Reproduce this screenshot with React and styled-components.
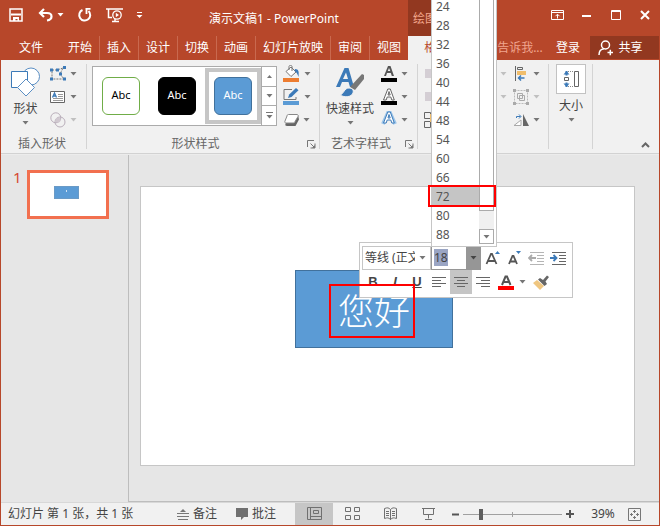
import React, { useEffect, useRef, useState } from "react";
import styled, { createGlobalStyle, css } from "styled-components";

const c = {
  red: "#b7472a",
  darkRed: "#923820",
  ribbon: "#f1f1f1",
  canvas: "#e6e6e6",
  line: "#c6c6c6",
  text: "#444444",
  muted: "#666666",
  grey: "#767676",
  blue: "#3c7ab8",
  fill: "#5b9bd5",
};

const GlobalStyle = createGlobalStyle`
  * { box-sizing: border-box; }
  body {
    margin: 0;
    overflow: hidden;
    font: 12px/18px "Noto Sans", "Noto Sans CJK SC", sans-serif;
    color: ${c.text};
  }
  button, input, select { font: inherit; color: inherit; }
  svg { display: block; flex: none; }
`;

const Window = styled.div`
  display: flex;
  flex-direction: column;
  min-height: 100vh;
  border: 1px solid ${c.red};
  border-top: 0;
  background: ${c.canvas};
`;

const PlainButton = styled.button`
  display: flex;
  align-items: center;
  justify-content: center;
  padding: 0;
  border: 0;
  background: transparent;
  white-space: nowrap;
`;

/* Title bar */
const TitleBar = styled.header`
  display: grid;
  grid-template-columns: 139px 1fr 89px 162px;
  height: 36px;
  background: ${c.red};
  color: #fff;
`;
const QuickAccess = styled.div`
  display: flex;
  align-items: flex-start;
  gap: 13px;
  padding: 7px 0 0 7px;
`;
const QuickButton = styled(PlainButton)`
  gap: 4px;
  height: 16px;
`;
const Title = styled.h1`
  margin: 0;
  padding-top: 2px;
  font-size: 12px;
  font-weight: 400;
  line-height: 34px;
  text-align: center;
  white-space: nowrap;
`;
const ContextLabel = styled.div`
  padding-left: 5px;
  background: ${c.darkRed};
  color: #f3a78d;
  line-height: 38px;
  white-space: nowrap;
  overflow: hidden;
`;
const Clipped = styled.span`
  display: block;
  width: ${(p) => p.$width}px;
  overflow: hidden;
`;
const WindowControls = styled.div`
  display: flex;
  justify-content: flex-end;
`;
const WindowButton = styled(PlainButton)`
  width: 29px;
  height: 30px;
`;

/* Tabs */
const TabBar = styled.nav`
  display: flex;
  height: 24px;
  background: ${c.red};
  color: #fff;
`;
const Tab = styled(PlainButton)`
  padding: 0 7px;
  border-right: ${(p) => (p.$last ? "0" : "1px solid #c9694f")};
`;
const FileTab = styled(PlainButton)`
  width: 60px;
`;
const ActiveTab = styled(PlainButton)`
  width: 89px;
  justify-content: flex-start;
  padding-left: 16px;
  background: ${c.ribbon};
  color: ${c.red};
`;
const TellMe = styled(PlainButton)`
  flex: 1;
  justify-content: flex-start;
  color: #f0a58e;
`;
const SignIn = styled(PlainButton)`
  width: 44px;
`;
const Share = styled(PlainButton)`
  width: 69px;
  gap: 4px;
  margin-bottom: 1px;
  padding-right: 8px;
  background: ${c.darkRed};
`;

/* Ribbon */
const Ribbon = styled.section`
  display: flex;
  height: 94px;
  background: ${c.ribbon};
  border-bottom: 1px solid #d2d2d2;
`;
const Group = styled.div`
  display: flex;
  flex-direction: column;
  width: ${(p) => p.$width}px;
`;
const GroupBody = styled.div`
  display: flex;
  height: 72px;
  padding-left: ${(p) => p.$pad}px;
`;
const GroupLabel = styled.div`
  display: flex;
  align-items: center;
  height: 21px;
  padding: 3px 3px 0 0;
  color: ${c.muted};
  span { flex: 1; text-align: center; white-space: nowrap; }
`;
const Launcher = styled(PlainButton)`
  margin-left: 3px;
`;
const Separator = styled.div`
  width: 1px;
  margin: 4px 0;
  background: #d4d4d4;
`;
const BigButton = styled(PlainButton)`
  flex-direction: column;
  justify-content: flex-start;
  width: ${(p) => p.$width}px;
  padding-top: ${(p) => p.$top}px;
  gap: 3px;
`;
const Column = styled.div`
  display: flex;
  flex-direction: column;
  padding-top: 2px;
  margin-left: ${(p) => p.$gap || 0}px;
`;
const SmallButton = styled(PlainButton)`
  gap: 4px;
  height: 23px;
`;
const SizeBox = styled.span`
  display: grid;
  place-items: center;
  width: 30px;
  height: 30px;
  border: 1px solid #c2c2c2;
  background: #fff;
`;
const Gallery = styled.div`
  display: flex;
  width: 185px;
  height: 60px;
  margin-top: 6px;
  border: 1px solid #ababab;
  background: #fff;
`;
const GalleryItem = styled.button`
  display: grid;
  place-items: center;
  width: 56px;
  height: 56px;
  margin: 1px 0 0;
  padding: 0;
  border: ${(p) => (p.$selected ? `4px solid ${c.line}` : "4px solid transparent")};
  background: #fff;
`;
const Swatch = styled.span`
  width: 38px;
  height: 38px;
  border: 1px solid ${(p) => p.$edge};
  border-radius: 6px;
  background: ${(p) => p.$fill};
  color: ${(p) => p.$ink};
  font-size: 11px;
  line-height: 34px;
`;
const GalleryScroll = styled.div`
  display: flex;
  flex-direction: column;
  width: 15px;
  margin-left: auto;
  border-left: 1px solid #ababab;
`;
const GalleryStep = styled(PlainButton)`
  flex: 1;
  & + & { border-top: 1px solid #ababab; }
`;
const ArrangeColumn = styled(Column)`
  width: 83px;
`;
const WideSplit = styled(SmallButton)`
  justify-content: space-between;
`;
const Collapse = styled(PlainButton)`
  align-self: flex-end;
  width: 28px;
  height: 16px;
  margin-left: auto;
`;

/* Work area */
const Work = styled.main`
  display: flex;
  flex: 1;
  border-top: 1px solid #ececec;
`;
const Slides = styled.aside`
  display: flex;
  align-items: flex-start;
  gap: 6px;
  width: 128px;
  padding: 15px 0 0 12px;
  border-right: 1px solid #bdbdbd;
`;
const SlideNumber = styled.span`
  width: 8px;
  color: #d64a32;
  font-size: 15px;
  line-height: 14px;
`;
const Thumb = styled.button`
  display: flex;
  align-items: flex-start;
  width: 82px;
  height: 49px;
  padding: 13px 0 0 24px;
  border: 3px solid #f2704f;
  background: #fff;
`;
const ThumbShape = styled.span`
  display: block;
  width: 25px;
  height: 13px;
  border: 1px solid #6a9ac6;
  background: radial-gradient(circle at 50% 40%, #cfe2f3 0 1px, transparent 1px) ${c.fill};
`;
const Stage = styled.section`
  display: flex;
  flex: 1;
  padding: 31px 24px 35px 11px;
  border-bottom: 1px solid #bdbdbd;
`;
const Slide = styled.div`
  position: relative;
  flex: 1;
  border: 1px solid ${c.line};
  background: #fff;
`;
const Shape = styled.div`
  position: absolute;
  left: 154px;
  top: 83px;
  display: grid;
  place-items: center;
  width: 158px;
  height: 78px;
  border: 1px solid #41719c;
  background: ${c.fill};
  color: #fff;
  font: 300 36px/74px "Noto Sans CJK SC", sans-serif;
`;
const Callout = styled.div`
  position: absolute;
  z-index: 5;
  border: 2px solid #f00;
  pointer-events: none;
  ${(p) =>
    p.$kind === "size"
      ? css`left: 287px; top: -2px; width: 68px; height: 22px;`
      : css`left: 188px; top: 97px; width: 86px; height: 54px;`}
`;

/* Mini toolbar */
const MiniToolbar = styled.div`
  position: absolute;
  left: 218px;
  top: 55px;
  z-index: 2;
  width: 214px;
  padding: 3px 2px;
  border: 1px solid ${c.line};
  background: #fff;
`;
const ToolRow = styled.div`
  display: flex;
  height: 24px;
`;
const FontBox = styled.label`
  display: flex;
  align-items: center;
  width: 69px;
  border: 1px solid ${c.line};
  padding-right: 4px;
  gap: 4px;
`;
const FontSelect = styled.select`
  flex: 1;
  min-width: 0;
  height: 20px;
  padding: 0 0 0 2px;
  border: 0;
  outline: 0;
  appearance: none;
  background: transparent;
  text-overflow: clip;
`;
const SizeCombo = styled.div`
  position: relative;
  display: flex;
  width: 50px;
  border: 1px solid #969696;
`;
const SizeInput = styled.input`
  flex: 1;
  min-width: 0;
  height: 20px;
  padding: 0 0 0 2px;
  border: 0;
  outline: 0;
  background: transparent;
  &::selection { background: #9aa5c4; color: #444; }
`;
const SizeArrow = styled(PlainButton)`
  width: 14px;
  background: #969696;
`;
const SizeList = styled.div`
  position: absolute;
  left: -1px;
  bottom: 100%;
  display: flex;
  align-items: flex-end;
  width: 66px;
  height: 250px;
  overflow: hidden;
  border: 1px solid ${c.line};
  background: #fff;
`;
const SizeOptions = styled.div`
  flex: 1;
  padding-bottom: 2px;
`;
const SizeOption = styled.button`
  display: block;
  width: 100%;
  height: 19px;
  padding: 0 4px;
  border: 0;
  background: ${(p) => (p.$active ? "#c5c5c5" : "#fff")};
  color: #555;
  line-height: 19px;
  text-align: left;
`;
const Scrollbar = styled.div`
  display: flex;
  flex-direction: column;
  align-self: stretch;
  width: 15px;
  margin: 0 2px 2px 0;
  background: #f0f0f0;
`;
const ScrollThumb = styled.div`
  flex: 1;
  border: 1px solid #ababab;
  background: #fff;
`;
const ScrollDown = styled(PlainButton)`
  height: 15px;
  margin-top: 18px;
  border: 1px solid #ababab;
  background: #fff;
`;
const Tool = styled(PlainButton)`
  width: 22px;
  background: ${(p) => (p.$active ? "#c5c5c5" : "transparent")};
  font-family: "Liberation Sans", sans-serif;
  font-size: 13px;
  font-weight: 700;
  font-style: ${(p) => (p.$italic ? "italic" : "normal")};
  text-decoration: ${(p) => (p.$underline ? "underline" : "none")};
`;
const FontColor = styled(PlainButton)`
  width: 36px;
  gap: 5px;
`;

/* Status bar */
const StatusBar = styled.footer`
  display: flex;
  align-items: stretch;
  height: 24px;
  border-top: 1px solid #d8d8d8;
  border-bottom: 1px solid ${c.red};
  margin-bottom: -1px;
  background: ${c.ribbon};
`;
const StatusText = styled.span`
  flex: 1;
  padding-left: 7px;
  line-height: 22px;
  white-space: nowrap;
`;
const StatusButton = styled(PlainButton)`
  gap: 4px;
  margin-right: 19px;
`;
const ViewButton = styled(PlainButton)`
  width: 38px;
  background: ${(p) => (p.$active ? c.line : "transparent")};
`;
const ZoomStep = styled(PlainButton)`
  width: 16px;
`;
const ZoomSlider = styled.input`
  appearance: none;
  align-self: center;
  width: 99px;
  height: 12px;
  margin: 0;
  background:
    linear-gradient(#a0a0a0, #a0a0a0) center / 100% 1px no-repeat,
    linear-gradient(#a0a0a0, #a0a0a0) center / 1px 5px no-repeat;
  &::-webkit-slider-thumb {
    appearance: none;
    width: 4px;
    height: 11px;
    background: #5e5e5e;
  }
`;
const ZoomValue = styled(PlainButton)`
  width: 50px;
`;
const FitButton = styled(PlainButton)`
  width: 13px;
  margin-right: 18px;
`;

const Caret = ({ color = c.grey, up }) => (
  <svg width="7" height="4" viewBox="0 0 7 4">
    <path d={up ? "M1 4h5L3.5 1z" : "M0.5 0h6L3.5 3.6z"} fill={color} />
  </svg>
);

const Svg = ({ w = 16, h = 16, children }) => (
  <svg width={w} height={h} viewBox={`0 0 ${w} ${h}`} fill="none">
    {children}
  </svg>
);

const SaveIcon = () => (
  <Svg>
    <path d="M2 2h12v12H2z" stroke="#fff" strokeWidth="1.5" />
    <path d="M3 7.5h10" stroke="#fff" strokeWidth="2" />
    <path d="M5 10h6v4H9.500v-2H7.500v2H5z" fill="#fff" />
  </Svg>
);
const UndoIcon = () => (
  <Svg>
    <path d="M7 2 3 6l4 4M3 6h7c2.500 0 4.500 1 4.500 3.500 0 2-1.500 3.500-4.500 4" stroke="#fff" strokeWidth="2.200" />
  </Svg>
);
const RedoIcon = () => (
  <Svg>
    <path d="M5.500 3a5.500 5.500 0 1 0 6 1" stroke="#fff" strokeWidth="2" />
    <path d="M8.500 1.800h5M9.500 2v5" stroke="#fff" strokeWidth="1.800" />
  </Svg>
);
const ShowIcon = () => (
  <Svg w={17}>
    <path d="M0 2h17M2.500 2v8.500H6M6 14.500h7M9 12v2" stroke="#fff" strokeWidth="1.500" />
    <circle cx="11" cy="8" r="4.200" stroke="#fff" strokeWidth="1.300" />
    <path d="M9.800 5.800v4.500L13 8z" fill="#fff" />
  </Svg>
);
const MoreIcon = () => (
  <Svg w={7} h={8}>
    <path d="M1 1.500h5" stroke="#fff" />
    <path d="M.5 4h6l-3 3z" fill="#fff" />
  </Svg>
);
const RibbonOptionsIcon = () => (
  <Svg w={13} h={10}>
    <path d="M.5.5h12v9H.5zM.5 2.500h12M6.500 8.500V4.500M4.500 6.200l2-2 2 2" stroke="#fff" />
  </Svg>
);
const PersonIcon = () => (
  <Svg w={16} h={16}>
    <circle cx="7.500" cy="5" r="4" stroke="#fff" strokeWidth="1.500" />
    <path d="M1 15c0-3.500 2-6 5-6.300M9.500 12.500h5.500M12.300 9.800v5.500" stroke="#fff" strokeWidth="1.500" />
  </Svg>
);
const ShapesIcon = () => (
  <Svg w={30} h={30}>
    <circle cx="20" cy="9.500" r="8.500" stroke="#5b8fc4" fill="#fff" />
    <path d="M.5 4.500h16v16H.5z" stroke={c.blue} fill="#fff" />
    <path d="M15 12l8.500 8.500L15 29l-8.500-8.500z" stroke="#5b8fc4" fill="#fff" />
  </Svg>
);
const EditShapeIcon = () => (
  <Svg>
    <path d="M2 4h5l6-2-3 6 4 5H2V4" stroke="#777" strokeDasharray="2 1" />
    <path d="M0 2.500h3v3H0zM6 2.500h3v3H6zM13 0h3v3h-3zM9 6.500h3v3H9zM0 11.500h3v3H0zM13 11.500h3v3h-3z" fill={c.blue} />
  </Svg>
);
const TextBoxIcon = () => (
  <Svg w={16}>
    <path d="M.5 2.500h14v11H.5z" stroke="#666" fill="#fff" />
    <path d="M2.500 8.500 4.500 4l2 4.500M3.200 7h2.600" stroke={c.blue} strokeWidth="1.300" />
    <path d="M8 5.500h5M8 7.500h5M3 9.500h10M3 11.500h10" stroke="#999" />
  </Svg>
);
const MergeIcon = () => (
  <Svg>
    <circle cx="5.800" cy="5.800" r="5" stroke="#b9aeba" />
    <circle cx="10" cy="10" r="5" stroke="#b9aeba" />
    <circle cx="8" cy="8" r="2.500" fill="#d0c8d0" />
  </Svg>
);
const FillIcon = () => (
  <Svg w={17} h={17}>
    <path d="M3 6.500 8 2l5 5-5 4.500zM6 5V1.500C6 0 9 0 9 1.500V6" stroke="#777" fill="#fff" />
    <path d="M12 4c4 0 4 3 3.500 8-1-3-2-5-4-6z" fill={c.blue} />
    <path d="M0 13h16v4H0z" fill="#ed7d31" />
  </Svg>
);
const OutlineIcon = () => (
  <Svg w={17} h={17}>
    <path d="M9 1.500H1v10h12V9" stroke="#777" />
    <path d="m5 10 1.200-3.500L13 0l2.500 2.200L8.500 9z" fill={c.blue} />
    <path d="M0 13h16v4H0z" fill={c.fill} />
  </Svg>
);
const EffectIcon = () => (
  <Svg w={15} h={14}>
    <path d="M2 9.500h8.500L14 2l1 4.500L11.500 13H3c-1.500 0-2-1-1.500-2z" fill="#666" />
    <path d="M4.500 1.500H13c1 0 1.500 1 1 2L11 8.500c-.5 1-1 1.500-2 1.500H2c-1 0-1.500-1-1-2l2-5c.2-1 .5-1.500 1.500-1.500z" fill="#fff" stroke="#888" />
  </Svg>
);
const LauncherIcon = () => (
  <Svg w={9} h={9}>
    <path d="M.5 7V.5H7M3.500 3.500 7 7M8 3.500V8H3.500" stroke="#777" />
    <path d="M8 5v3H5z" fill="#777" />
  </Svg>
);
const QuickStyleIcon = () => (
  <Svg w={28} h={30}>
    <path d="M0 20 8.500 1h4L18 20h-4l-1.500-5H6l-2 5zM7 12h5L10 5.500z" fill={c.blue} />
    <path d="m14 20 12-13 2 1v4l-9 11z" fill="#777" />
    <path d="M4 28c4-1 4-7 9-7 3 0 5 2 4 5-1.500 4-8 5-13 2z" fill={c.blue} stroke={c.ribbon} />
  </Svg>
);
const LetterIcon = ({ kind }) => (
  <Svg w={16} h={17}>
    {kind === "glow" && <path d="M2 13 7 2h2l5 11" stroke="#9cc5ea" strokeWidth="4" />}
    <path
      d={kind === "fill" ? "M3 11 7 1h2.500L13 11h-2.200l-1-3H6l-1 3zM6.800 6h2.500L8 3z" : "M2.500 12 6.800 1h2.500l4 11h-2.500l-1-3H6.200l-1 3zM7 7h2.200L8 3.500z"}
      fill={kind === "fill" ? "#555" : "#fff"}
      stroke={kind === "fill" ? "none" : kind === "glow" ? c.blue : "#666"}
    />
    {kind !== "glow" && <path d="M0 13h16v4H0z" fill="#000" />}
  </Svg>
);
const AlignObjectsIcon = () => (
  <Svg>
    <path d="M2.500 0v15" stroke="#666" />
    <path d="M4.500 1.500h5v2h-5z" stroke="#666" />
    <path d="M4 5h9v4H4z" fill="#f0bd6b" />
    <path d="M11.500 12H5.500M8 9.500 5.500 12 8 14.500" stroke={c.blue} strokeWidth="1.500" />
  </Svg>
);
const GroupIcon = () => (
  <Svg>
    <path d="M1.500 1.500h13v13h-13z" stroke="#bbb" strokeDasharray="2 1" />
    <path d="M4.500 4.500h5v5h-5zM6.500 6.500h5v5h-5z" stroke="#aaa" />
    <path d="M0 0h3v3H0zM13 0h3v3h-3zM0 13h3v3H0zM13 13h3v3h-3z" fill="#aaa" />
  </Svg>
);
const RotateIcon = () => (
  <Svg>
    <path d="M1 13.500h7V8z" fill="#fff" stroke="#aaa" />
    <path d="M10 2v12h6z" fill="#666" />
    <path d="M3.500 6V4.500h4M6 2.500l2 2-2 2" stroke={c.blue} />
  </Svg>
);
const SelectionIcon = ({ kind }) => (
  <Svg w={16} h={18}>
    {kind === "pane" ? (
      <>
        <path d="M.5 1.500h6v6h-6zM.5 10.500h6v6h-6z" stroke="#666" />
        <path d="M6 3h4v8H6z" fill="#f0bd6b" />
      </>
    ) : (
      <path d="M1 4h10v9H1z" fill="#d4ced4" />
    )}
  </Svg>
);
const SizeIcon = () => (
  <Svg w={18} h={18}>
    <path d="M12.500 1.500h4v15h-4z" stroke="#666" />
    <path d="M4 1.500h8M4 16.500h8" stroke="#888" strokeDasharray="1 1" />
    <path d="M2.500 7.500h4v3h-4z" stroke="#666" />
    <path d="M4.500 1v4.500M4.500 12.500V17" stroke={c.blue} strokeWidth="2" />
    <path d="M1.500 4.500 4.500 1l3 3.500zM1.500 13.500l3 3.500 3-3.500z" fill={c.blue} />
  </Svg>
);
const ResizeTextIcon = ({ shrink }) => (
  <Svg w={18} h={16}>
    <path d={shrink ? "M4 14 7.500 6h1L12 14M5.500 11.500h5" : "M3.500 14 8 4h1L13.500 14M5 11h7"} stroke="#555" strokeWidth="1.800" />
    <path d={shrink ? "M11 1h5l-2.500 3z" : "M12 4h5l-2.500-3z"} fill={c.blue} />
  </Svg>
);
const IndentIcon = ({ more }) => (
  <Svg w={17} h={13}>
    <path d="M2 .5h14M9 3.500h7M9 6.500h7M9 9.500h7M2 12.500h14" stroke={more ? "#666" : "#b5b5b5"} />
    <path d={more ? "M0 6h6M3.500 3l3 3-3 3" : "M1 6h7M4 3 1 6l3 3"} stroke={more ? c.blue : "#aaa"} strokeWidth="1.800" />
  </Svg>
);
const alignPaths = {
  left: "M0 .5h14M0 3.500h9M0 6.500h14M0 9.500h9",
  center: "M0 .5h14M3 3.500h8M0 6.500h14M3 9.500h8",
  right: "M0 .5h14M5 3.500h9M0 6.500h14M5 9.500h9",
};
const AlignIcon = ({ kind }) => (
  <Svg w={14} h={11}>
    <path d={alignPaths[kind]} stroke="#666" />
  </Svg>
);
const FontColorIcon = () => (
  <Svg w={16} h={15}>
    <path d="M4 10 7.500 1.500h1.500L12.500 10M5.300 7h6" stroke="#555" strokeWidth="2" />
    <path d="M0 11h16v4H0z" fill="#f00" />
  </Svg>
);
const BrushIcon = () => (
  <Svg w={17} h={15}>
    <path d="m0 8 4-3 7 6-4 4z" fill="#efc680" />
    <path d="m5 4.500 2-1.500 3 2 4-4.500 2 1.500-3.500 4.500L14 9l-2.500 2z" fill="#666" />
  </Svg>
);
const NotesIcon = () => (
  <Svg w={12} h={12}>
    <path d="M3 4h6L6 1z" fill="#777" />
    <path d="M0 5.500h12M0 8.500h12M1 11.500h10" stroke="#777" />
  </Svg>
);
const CommentIcon = () => (
  <Svg w={12} h={12}>
    <path d="M0 0h12v9H8l-3 3V9H0z" fill="#707070" />
  </Svg>
);
const viewIcons = {
  普通视图: "M.5.5h14v12H.5zM3.500 1v12M4 9.500h11M6.500 3.500h5v3h-5z",
  幻灯片浏览: "M.5.5h5v4h-5zM9.500.5h5v4h-5zM.5 8.500h5v4h-5zM9.500 8.500h5v4h-5z",
  阅读视图: "M1.500 1.500c3-1 4-1 6 1v10c-2-2-3-2-6-1zM13.500 1.500c-3-1-4-1-6 1v10c2-2 3-2 6-1zM3 4.500h3M3 6.500h3M3 8.500h3M9 4.500h3M9 6.500h3M9 8.500h3",
  幻灯片放映: "M1 1.500h13M2.500 2v5.500h10V2M7.500 8v3.500M4 12.500h7",
};
const ViewIcon = ({ name }) => (
  <Svg w={15} h={14}>
    <path d={viewIcons[name]} stroke="#707070" />
  </Svg>
);
const FitIcon = () => (
  <Svg w={13} h={13}>
    <path d="M.5.5h12v12H.5z" stroke="#777" />
    <path d="M6.500 2v3M5 3.500h3M6.500 8v3M5 9.500h3M2 6.500h3M3.500 5v3M8 6.500h3M9.500 5v3" stroke="#777" />
  </Svg>
);

const tabs = ["开始", "插入", "设计", "切换", "动画", "幻灯片放映", "审阅", "视图"];
const sizes = [24, 28, 32, 36, 40, 44, 48, 54, 60, 66, 72, 80, 88];
const swatches = [
  { name: "彩色轮廓", fill: "#fff", edge: "#70ad47", ink: "#000" },
  { name: "黑色填充", fill: "#000", edge: "#000", ink: "#fff" },
  { name: "蓝色填充", fill: c.fill, edge: "#41719c", ink: "#fff" },
];

const SplitButton = ({ label, icon, faded }) => (
  <SmallButton aria-label={label}>
    {icon}
    <Caret color={faded ? "#c0c0c0" : c.grey} />
  </SmallButton>
);

function FontSizeBox() {
  const field = useRef(null);
  const [value, setValue] = useState("18");
  useEffect(() => {
    field.current.focus();
    field.current.select();
  }, []);
  return (
    <SizeCombo>
      <SizeInput ref={field} aria-label="字号" value={value} onChange={(e) => setValue(e.target.value)} />
      <SizeArrow aria-label="打开字号列表"><Caret color="#444" /></SizeArrow>
      <SizeList>
        <SizeOptions role="listbox" aria-label="字号列表">
          {sizes.map((n) => (
            <SizeOption key={n} role="option" aria-selected={n === 72} $active={n === 72} onClick={() => setValue(String(n))}>
              {n}
            </SizeOption>
          ))}
        </SizeOptions>
        <Scrollbar>
          <ScrollThumb />
          <ScrollDown aria-label="向下滚动"><Caret /></ScrollDown>
        </Scrollbar>
      </SizeList>
    </SizeCombo>
  );
}

export default function App() {
  const [zoom, setZoom] = useState(17);
  return (
    <Window>
      <GlobalStyle />
      <TitleBar>
        <QuickAccess>
          <QuickButton aria-label="保存"><SaveIcon /></QuickButton>
          <QuickButton aria-label="撤消"><UndoIcon /><Caret color="#fff" /></QuickButton>
          <QuickButton aria-label="重复"><RedoIcon /></QuickButton>
          <QuickButton aria-label="从头开始"><ShowIcon /></QuickButton>
          <QuickButton aria-label="自定义快速访问工具栏"><MoreIcon /></QuickButton>
        </QuickAccess>
        <Title>演示文稿1 - PowerPoint</Title>
        <ContextLabel><Clipped $width={18}>绘图</Clipped></ContextLabel>
        <WindowControls>
          <WindowButton aria-label="功能区显示选项"><RibbonOptionsIcon /></WindowButton>
          <WindowButton aria-label="最小化"><Svg w={10} h={10}><path d="M0 6h9" stroke="#fff" strokeWidth="2" /></Svg></WindowButton>
          <WindowButton aria-label="最大化"><Svg w={10} h={10}><path d="M.5.5h9v9h-9zM0 1.500h10" stroke="#fff" /></Svg></WindowButton>
          <WindowButton aria-label="关闭"><Svg w={10} h={10}><path d="m1 1 8 8M9 1 1 9" stroke="#fff" strokeWidth="2" /></Svg></WindowButton>
        </WindowControls>
      </TitleBar>

      <TabBar>
        <FileTab>文件</FileTab>
        {tabs.map((t, i) => (
          <Tab key={t} $last={i === tabs.length - 1}>{t}</Tab>
        ))}
        <ActiveTab><Clipped $width={7}>格</Clipped></ActiveTab>
        <TellMe>告诉我...</TellMe>
        <SignIn>登录</SignIn>
        <Share><PersonIcon />共享</Share>
      </TabBar>

      <Ribbon>
        <Group $width={85}>
          <GroupBody $pad={6}>
            <BigButton $width={37} $top={7}><ShapesIcon /><span>形状</span><Caret /></BigButton>
            <Column $gap={6}>
              <SplitButton label="编辑形状" icon={<EditShapeIcon />} />
              <SplitButton label="文本框" icon={<TextBoxIcon />} />
              <SplitButton label="合并形状" icon={<MergeIcon />} faded />
            </Column>
          </GroupBody>
          <GroupLabel><span>插入形状</span></GroupLabel>
        </Group>
        <Separator />
        <Group $width={232}>
          <GroupBody $pad={5}>
            <Gallery>
              {swatches.map((s, i) => (
                <GalleryItem key={s.name} aria-label={s.name} $selected={i === 2}>
                  <Swatch $fill={s.fill} $edge={s.edge} $ink={s.ink}>Abc</Swatch>
                </GalleryItem>
              ))}
              <GalleryScroll>
                <GalleryStep aria-label="上一行"><Caret up /></GalleryStep>
                <GalleryStep aria-label="下一行"><Caret /></GalleryStep>
                <GalleryStep aria-label="更多样式">
                  <Svg w={7} h={7}><path d="M0 .5h7" stroke={c.grey} /><path d="M.5 3h6l-3 3.500z" fill={c.grey} /></Svg>
                </GalleryStep>
              </GalleryScroll>
            </Gallery>
            <Column $gap={6}>
              <SplitButton label="形状填充" icon={<FillIcon />} />
              <SplitButton label="形状轮廓" icon={<OutlineIcon />} />
              <SplitButton label="形状效果" icon={<EffectIcon />} />
            </Column>
          </GroupBody>
          <GroupLabel><span>形状样式</span><Launcher aria-label="设置形状格式"><LauncherIcon /></Launcher></GroupLabel>
        </Group>
        <Separator />
        <Group $width={97}>
          <GroupBody $pad={3}>
            <BigButton $width={54} $top={7}><QuickStyleIcon /><span>快速样式</span><Caret /></BigButton>
            <Column $gap={4}>
              <SplitButton label="文本填充" icon={<LetterIcon kind="fill" />} />
              <SplitButton label="文本轮廓" icon={<LetterIcon kind="outline" />} />
              <SplitButton label="文本效果" icon={<LetterIcon kind="glow" />} />
            </Column>
          </GroupBody>
          <GroupLabel><span>艺术字样式</span><Launcher aria-label="设置文本效果格式"><LauncherIcon /></Launcher></GroupLabel>
        </Group>
        <Separator />
        <Group $width={130}>
          <GroupBody $pad={6}>
            <ArrangeColumn>
              <WideSplit aria-label="上移一层"><SelectionIcon /><Caret color="#c0c0c0" /></WideSplit>
              <WideSplit aria-label="下移一层"><SelectionIcon /><Caret color="#c0c0c0" /></WideSplit>
              <WideSplit aria-label="选择窗格"><SelectionIcon kind="pane" /></WideSplit>
            </ArrangeColumn>
            <Column $gap={6}>
              <SplitButton label="对齐" icon={<AlignObjectsIcon />} />
              <SplitButton label="组合" icon={<GroupIcon />} faded />
              <SplitButton label="旋转" icon={<RotateIcon />} />
            </Column>
          </GroupBody>
        </Group>
        <Separator />
        <Group $width={43}>
          <GroupBody $pad={2}>
            <BigButton $width={40} $top={4}><SizeBox><SizeIcon /></SizeBox><span>大小</span><Caret /></BigButton>
          </GroupBody>
        </Group>
        <Separator />
        <Collapse aria-label="折叠功能区">
          <Svg w={9} h={6}><path d="m1 5 3.500-3.500L8 5" stroke="#666" strokeWidth="2" /></Svg>
        </Collapse>
      </Ribbon>

      <Work>
        <Slides>
          <SlideNumber>1</SlideNumber>
          <Thumb aria-label="幻灯片 1"><ThumbShape /></Thumb>
        </Slides>
        <Stage>
          <Slide>
            <Shape>您好</Shape>
            <MiniToolbar>
              <ToolRow>
                <FontBox>
                  <FontSelect aria-label="字体" defaultValue="等线 (正文)"><option>等线 (正文)</option></FontSelect>
                  <Caret />
                </FontBox>
                <FontSizeBox />
                <Tool aria-label="增大字号"><ResizeTextIcon /></Tool>
                <Tool aria-label="减小字号"><ResizeTextIcon shrink /></Tool>
                <Tool aria-label="减少缩进"><IndentIcon /></Tool>
                <Tool aria-label="增加缩进"><IndentIcon more /></Tool>
              </ToolRow>
              <ToolRow>
                <Tool>B</Tool>
                <Tool $italic>I</Tool>
                <Tool $underline>U</Tool>
                <Tool aria-label="左对齐"><AlignIcon kind="left" /></Tool>
                <Tool aria-label="居中" $active><AlignIcon kind="center" /></Tool>
                <Tool aria-label="右对齐"><AlignIcon kind="right" /></Tool>
                <FontColor aria-label="字体颜色"><FontColorIcon /><Caret /></FontColor>
                <Tool aria-label="格式刷"><BrushIcon /></Tool>
              </ToolRow>
            </MiniToolbar>
            <Callout $kind="size" />
            <Callout $kind="text" />
          </Slide>
        </Stage>
      </Work>

      <StatusBar>
        <StatusText>幻灯片 第 1 张，共 1 张</StatusText>
        <StatusButton><NotesIcon />备注</StatusButton>
        <StatusButton><CommentIcon />批注</StatusButton>
        {Object.keys(viewIcons).map((v, i) => (
          <ViewButton key={v} aria-label={v} $active={i === 0}><ViewIcon name={v} /></ViewButton>
        ))}
        <ZoomStep aria-label="缩小"><Svg w={7} h={7}><path d="M0 3.500h7" stroke="#555" strokeWidth="2" /></Svg></ZoomStep>
        <ZoomSlider type="range" aria-label="显示比例" min="0" max="100" value={zoom} onChange={(e) => setZoom(Number(e.target.value))} />
        <ZoomStep aria-label="放大"><Svg w={8} h={8}><path d="M0 4h8M4 0v8" stroke="#555" strokeWidth="2" /></Svg></ZoomStep>
        <ZoomValue>39%</ZoomValue>
        <FitButton aria-label="按窗口大小调整"><FitIcon /></FitButton>
      </StatusBar>
    </Window>
  );
}
